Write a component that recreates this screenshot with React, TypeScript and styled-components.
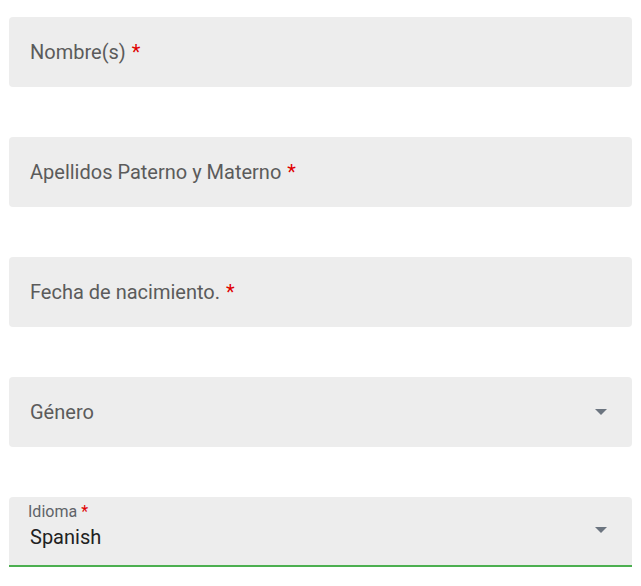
import styled, { createGlobalStyle } from "styled-components";

const GlobalStyle = createGlobalStyle`
  body {
    margin: 0;
    background: #fff;
    font-family: Roboto, "Liberation Sans", sans-serif;
  }
`;

interface FieldProps {
  label: string;
  required?: boolean;
  select?: boolean;
  value?: string;
}

const Form = () => {
  const fields: FieldProps[] = [
    { label: "Nombre(s)", required: true },
    { label: "Apellidos Paterno y Materno", required: true },
    { label: "Fecha de nacimiento.", required: true },
    { label: "Género", select: true },
    { label: "Idioma", required: true, select: true, value: "Spanish" },
  ];

  return (
    <>
      <GlobalStyle />
      <Wrapper>
        {fields.map((field) => (
          <Field key={field.label} $filled={!!field.value}>
            <FieldBody $filled={!!field.value}>
              {field.value ? (
                <>
                  <SmallLabel>
                    {field.label}
                    {field.required && <SmallStar>*</SmallStar>}
                  </SmallLabel>
                  <Value>{field.value}</Value>
                </>
              ) : (
                <Label>
                  {field.label}
                  {field.required && <Star>*</Star>}
                </Label>
              )}
            </FieldBody>
            {field.select && <Arrow $filled={!!field.value} />}
          </Field>
        ))}
      </Wrapper>
    </>
  );
};

const Wrapper = styled.div`
  display: flex;
  flex-direction: column;
  gap: 50px;
  padding: 17px 9px 0 9px;
`;

const Field = styled.div<{ $filled: boolean }>`
  display: flex;
  align-items: center;
  height: ${(p) => (p.$filled ? "68px" : "70px")};
  background-color: #ededed;
  border-radius: ${(p) => (p.$filled ? "4px 4px 0 0" : "4px")};
  border-bottom: ${(p) => (p.$filled ? "2px solid #4caf50" : "none")};
  padding: 0 25px 0 21px;
  box-sizing: content-box;
`;

const FieldBody = styled.div<{ $filled: boolean }>`
  flex: 1;
  display: flex;
  flex-direction: column;
  align-self: ${(p) => (p.$filled ? "flex-start" : "center")};
  padding-top: ${(p) => (p.$filled ? "7px" : "0")};
`;

const Label = styled.div`
  font-size: 20px;
  color: #5b5b5b;
`;

const SmallLabel = styled.div`
  font-size: 16px;
  color: #5f6368;
  line-height: 16px;
  margin-left: -2px;
`;

const Value = styled.div`
  font-size: 20px;
  color: #212121;
  line-height: 26px;
  margin-top: 4px;
`;

const Star = styled.span`
  color: #e00000;
  margin-left: 6px;
`;

const SmallStar = styled.span`
  color: #e00000;
  margin-left: 4px;
`;

const Arrow = styled.span<{ $filled: boolean }>`
  width: 0;
  height: 0;
  border-left: 6px solid transparent;
  border-right: 6px solid transparent;
  border-top: 6px solid #6c7580;
  margin-top: ${(p) => (p.$filled ? "-2px" : "0")};
`;

export default Form;
